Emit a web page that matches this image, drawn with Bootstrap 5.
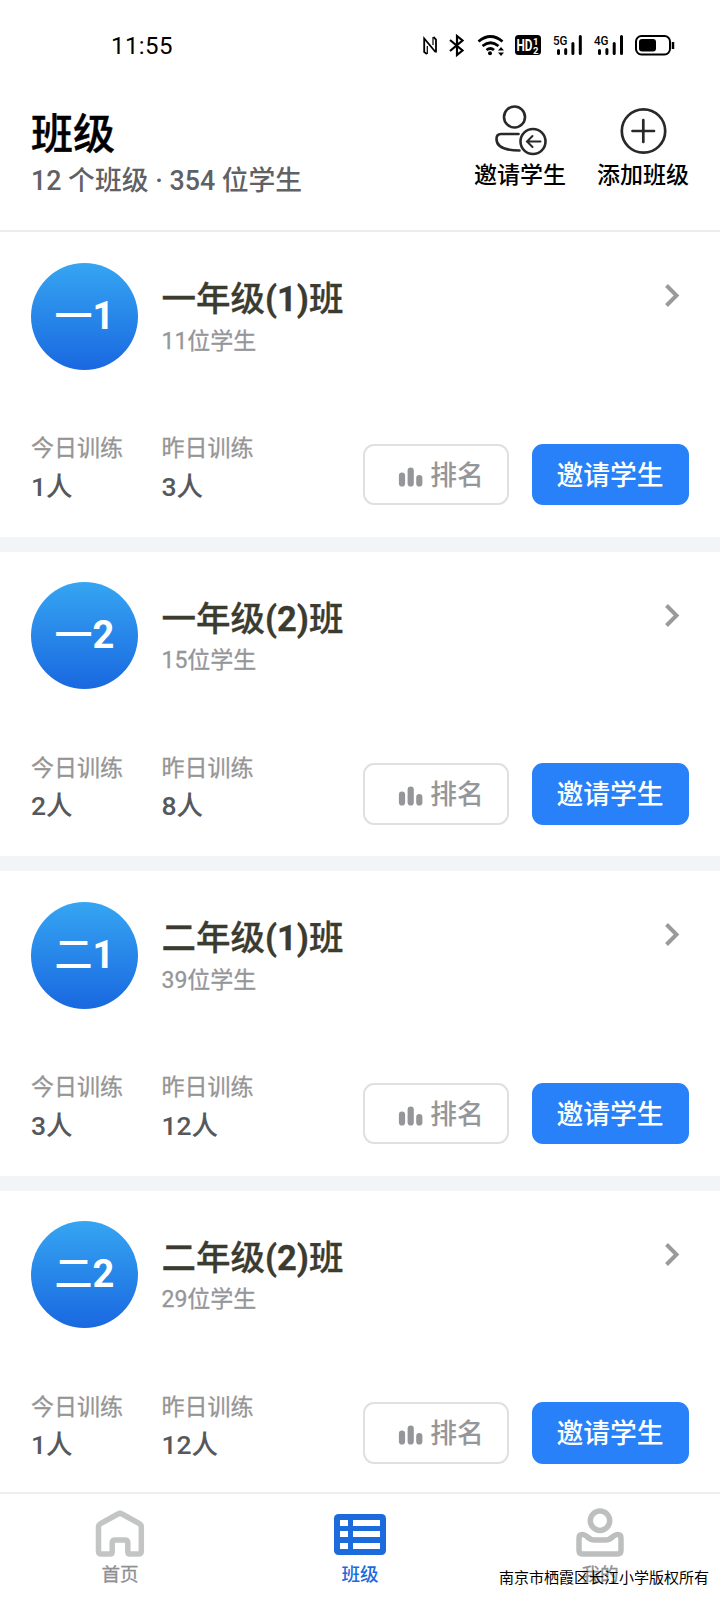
<!DOCTYPE html>
<html lang="zh-CN">
<head>
<meta charset="utf-8">
<meta name="viewport" content="width=device-width, initial-scale=1">
<title>班级</title>
<link href="https://cdn.jsdelivr.net/npm/bootstrap@5.3.0/dist/css/bootstrap.min.css" rel="stylesheet">
<style>
body{font-family:Roboto,"Noto Sans CJK SC",sans-serif;background:#fff;color:#000;height:1600px;overflow:hidden;font-weight:500}
.screen{width:720px;height:1600px}
.status{height:91px;padding:25px 45px 0 111px}
.clock{font-size:24px;line-height:42px;font-weight:400;letter-spacing:.4px}
.status svg{display:block}
.head{height:141px;padding:0 31px 0 31px;border-bottom:2px solid #ececec}
.title{font-size:42px;line-height:50px;margin:19px 0 0;font-weight:500;-webkit-text-stroke:.4px currentColor}
.sub{font-size:26.8px;line-height:34px;color:#5f6165;margin-top:4px}
.act{font-size:23px;line-height:30px;white-space:nowrap}
.act svg{display:block;margin:0 auto}
.list{background:#f3f4f6;height:1260px;overflow:hidden}
.klass{height:304.5px;padding:30.5px 31px 0;background:#fff}
.klass+.klass{margin-top:15px}
.disc{width:107px;height:107px;background:linear-gradient(#36a5f2,#1968e0);color:#fff;font-size:38px;font-weight:500;line-height:107px}
.kname{font-size:34.5px;line-height:44px;color:#3b3b30;font-weight:500;margin-top:14.5px;-webkit-text-stroke:.3px currentColor}
.kname b,.disc b{font-weight:700}
.count{font-size:23px;line-height:30px;color:#959699;font-weight:400;margin-top:5.5px}
.stat{width:130.5px;font-size:26.5px;line-height:36px;color:#55585c}
.stat .cap{font-size:23px;line-height:30px;color:#959595;font-weight:400}
.btn.act-btn{height:61.5px;border-radius:11px;font-size:26.8px;line-height:36px;font-weight:500;padding:3px 0 0;border-width:2px;display:flex;align-items:center;justify-content:center}
.btn-rank{width:146px;border-color:#e0e0e0;color:#959699;background:#fff}
.btn.act-btn.btn-invite{width:157px;margin-left:23px;background:#2881f8;border-color:#2881f8;color:#fff;padding-right:1px}
.tabs{height:108px;border-top:2px solid #efefef;background:#fff}
.tab{width:240px;font-size:18.6px;line-height:26px;color:#8f9092;font-weight:400}
.tab.on{color:#1b6bdc;font-weight:500}
.tab svg{display:block;margin:0 auto}
.owner{position:absolute;left:499px;top:1567px;font:15px/20px "Noto Sans CJK SC",sans-serif;color:#000;white-space:nowrap}
.firm{-webkit-text-stroke:.3px currentColor}
</style>
</head>
<body>
<div class="screen position-relative d-flex flex-column">
  <div class="status d-flex justify-content-between">
    <span class="clock">11:55</span>
    <svg width="260" height="40" viewBox="415 25 260 40" fill="none" stroke="#000" stroke-width="2">
      <path d="M427 54l-2.800-2V38.500L435.500 52M433.500 37l2.500 2.500v13" stroke-width="1.800"/><path d="M427.300 46v8M433 37v8" stroke-width="1.200"/>
      <path d="M450 40l12.500 10.500-5.500 4.500V36l5.500 4.500L450 51" stroke-width="2.200"/>
      <path d="M478.500 41.500q12-10 24 0M482.500 46q8-6.500 16 0M486.500 50q4-3 7.500 0" stroke-width="2.700"/>
      <circle cx="490" cy="53.300" r="2" fill="#000" stroke="none"/>
      <path d="M498 50.500l3-3.500 3 3.500zM498 52.500l3 3.500 3-3.500z" fill="#000" stroke="none"/>
      <rect x="515" y="35" width="26" height="20" rx="3.500" fill="#000" stroke="none"/>
      <g fill="#fff" stroke="none" font-family="Roboto" font-weight="700"><text x="516.500" y="51" font-size="16" textLength="16" lengthAdjust="spacingAndGlyphs">HD</text><text x="533" y="44.500" font-size="9.500">1</text><text x="533" y="53.500" font-size="9.500">2</text></g>
      <g fill="#000" stroke="none" font-family="Roboto" font-weight="500" font-size="13.500"><text x="553" y="45" textLength="14.500" lengthAdjust="spacingAndGlyphs">5G</text><text x="594" y="45" textLength="14.500" lengthAdjust="spacingAndGlyphs">4G</text></g>
      <path d="M558.500 53.500v-3M565.700 53.500v-4M572.900 53.500V43.500M580.300 53.500V36.500M599.500 53.500v-3M606.900 53.500v-4M614.200 53.500V43.500M621.500 53.500V36.500" stroke-width="3" stroke-linecap="round"/>
      <rect x="636" y="36" width="34" height="18.500" rx="5.500"/>
      <rect x="639" y="39" width="17" height="12.500" rx="3" fill="#000" stroke="none"/>
      <path d="M673 42v7" stroke-width="2.500"/>
    </svg>
  </div>
  <header class="head d-flex justify-content-between">
    <div>
      <h1 class="title">班级</h1>
      <div class="sub">12 个班级 · 354 位学生</div>
    </div>
    <div class="d-flex" style="gap:31px">
      <div class="act text-center">
        <svg width="92" height="70" viewBox="474 91 92 70" fill="none" stroke="#292929" stroke-width="2.600" stroke-linecap="round">
          <circle cx="514.500" cy="117" r="10.500"/><path d="M518.500 134H501q-4.500 0-4.500 5 0 11.500 23 11.500"/>
          <circle cx="533" cy="141.500" r="12.500"/><path d="M540.500 141.500h-13m5-5.500-5.500 5.500 5.500 5.500" stroke-width="2"/>
        </svg>邀请学生</div>
      <div class="act text-center">
        <svg width="92" height="70" viewBox="597 91 92 70" fill="none" stroke="#292929" stroke-width="2.700" stroke-linecap="round">
          <circle cx="643.500" cy="131" r="21.700"/><path d="M632.500 131h21.500M643.300 120v22"/>
        </svg>添加班级</div>
    </div>
  </header>
  <main class="list" id="list"></main>
  <nav class="tabs d-flex flex-shrink-0">
    <div class="tab firm text-center">
      <svg width="60" height="68" viewBox="90 1494 60 68" fill="none" stroke="#c3c4c4" stroke-width="5.500" stroke-linejoin="round"><path d="M98.500 1527q0-2 2-3.300L118 1514q2-1.300 4 0l17.500 9.700q1.800 1.300 1.800 3.300v24q0 3-3 3h-8.500q-2 0-2-2v-9q0-3-3-3h-9.600q-3 0-3 3v9q0 2-2 2h-8.700q-3 0-3-3z"/></svg>首页</div>
    <div class="tab on text-center">
      <svg width="60" height="68" viewBox="330 1494 60 68"><rect x="334" y="1514" width="52" height="41" rx="4.500" fill="#1b6bdc"/><path fill="#fff" d="M340 1520h8v6h-8zm13 0h27v6h-27zM340 1531h8v6h-8zm13 0h27v6h-27zM340 1543h8v6h-8zm13 0h27v6h-27z"/></svg>班级</div>
    <div class="tab firm text-center">
      <svg width="60" height="68" viewBox="570 1494 60 68" fill="none" stroke="#bdbebe" stroke-width="5.500" stroke-linejoin="round"><circle cx="600" cy="1520.700" r="9.700"/><path d="M579 1538q0-3.500 3.500-3.500 2 0 4.500 2 3.500 3.500 7.500 3.500h11q4 0 7.500-3.500 2.500-2 4.500-2 3.500 0 3.500 3.500v12.500q0 3.500-3.500 3.500h-35q-3.500 0-3.500-3.500z"/></svg>我的</div>
  </nav>
  <div class="owner">南京市栖霞区长江小学版权所有</div>
</div>
<script>
const classes=[["一",1,11,1,3],["一",2,15,2,8],["二",1,39,3,12],["二",2,29,1,12]];
document.getElementById("list").innerHTML=classes.map(([g,n,total,today,past])=>`
<section class="klass">
  <div class="d-flex">
    <div class="disc rounded-circle text-center flex-shrink-0">${g}<b>${n}</b></div>
    <div class="flex-grow-1" style="padding-left:23.500px">
      <div class="kname">${g}年级<b>(${n})</b>班</div>
      <div class="count firm">${total}位学生</div>
    </div>
    <svg width="30" height="40" viewBox="659 275 30 40" style="margin-top:12.500px" fill="none" stroke="#9a9a9a" stroke-width="4"><path d="M666.500 285.500l10 10-10 10"/></svg>
  </div>
  <div class="d-flex" style="margin-top:62px">
    <div class="stat"><div class="cap firm" style="margin-top:2.500px">今日训练</div><div style="margin-top:4.500px">${today}人</div></div>
    <div class="stat"><div class="cap firm" style="margin-top:2.500px">昨日训练</div><div style="margin-top:4.500px">${past}人</div></div>
    <div class="d-flex ms-auto" style="margin-top:12px">
      <button class="btn act-btn btn-rank" type="button"><svg width="32" height="30" viewBox="395 461 32 30" fill="none" stroke="#959699" stroke-width="6.200" stroke-linecap="round" style="margin-left:7px"><path d="M402 475.500v8M410.700 470.500v13M419.300 478v5.500"/></svg><span style="margin-left:3px">排名</span></button>
      <button class="btn act-btn btn-invite" type="button">邀请学生</button>
    </div>
  </div>
</section>`).join("");
</script>
<script src="https://cdn.jsdelivr.net/npm/bootstrap@5.3.0/dist/js/bootstrap.bundle.min.js"></script>
</body>
</html>
